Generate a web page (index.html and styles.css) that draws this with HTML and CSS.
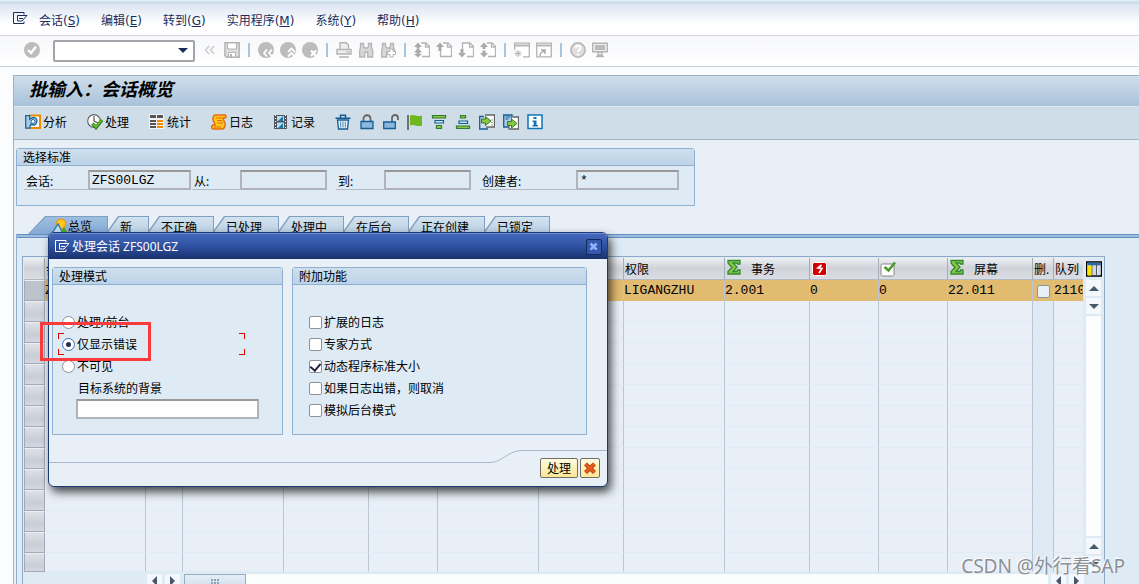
FILE: index.html
```html
<!DOCTYPE html>
<html lang="zh-CN">
<head>
    <meta charset="UTF-8">
    <meta name="viewport" content="width=device-width, initial-scale=1.0">
    <title>批输入：会话概览</title>
    <link rel="stylesheet" href="styles.css">
</head>
<body>
    <!-- Icon set -->
    <svg class="sprite" aria-hidden="true">
        <symbol id="i-session" viewBox="0 0 16 16"><path d="M12 3.500V1.500H1.500v11H12v-2M12 4.500H5.500v5.500H10l5-5.500h-3M7 7.500h4" fill="none" stroke="currentColor"/></symbol>
        <symbol id="i-ok" viewBox="0 0 16 16"><circle cx="8" cy="8" r="8" fill="#bcbcbc"/><path d="M4 8l3 3 5-6.500" fill="none" stroke="#fff" stroke-width="2.400"/></symbol>
        <symbol id="i-chev" viewBox="0 0 16 16"><path d="M7 4L3.500 8 7 12M12 4L8.500 8l3.500 4" fill="none" stroke="#ccc" stroke-width="1.500"/></symbol>
        <symbol id="i-save" viewBox="0 0 16 16"><path d="M1 .8h14.200v14.400H2.500L.8 13.500z" fill="#ddd" stroke="#b4b4b4" stroke-width="1.500"/><path d="M3.500 1h9v6h-9zM4.500 10.500h7v4.500h-7z" fill="#fff" stroke="#b4b4b4"/><path d="M6 12h2v3H6z" fill="#b4b4b4"/></symbol>
        <symbol id="i-back" viewBox="0 0 16 16"><circle cx="8" cy="8" r="8" fill="#bcbcbc"/><path d="M9 7.500L6 11l3 3.500M14 7.500L11 11l3 3.500" fill="none" stroke="#fff" stroke-width="1.800"/></symbol>
        <symbol id="i-exit" viewBox="0 0 16 16"><circle cx="8" cy="8" r="8" fill="#bcbcbc"/><path d="M8 10l3.500-3.500L15 10M8 14.500L11.500 11l3.500 3.500" fill="none" stroke="#fff" stroke-width="1.800"/></symbol>
        <symbol id="i-cancel" viewBox="0 0 16 16"><circle cx="8" cy="8" r="8" fill="#bcbcbc"/><path d="M9 8.500l5 5.500M14 8.500L9 14" fill="none" stroke="#fff" stroke-width="2.200"/></symbol>
        <symbol id="i-print" viewBox="0 0 16 16"><path d="M4 7V.7h6L12.500 3v4M1 7.500h14v4.500H1zM3 15h10" fill="#eee" stroke="#b4b4b4" stroke-width="1.400"/><path d="M10 10h4" stroke="#b4b4b4"/></symbol>
        <symbol id="i-find" viewBox="0 0 16 16"><path d="M2.500 1.500h3v3L7 6h2l1.500-1.500v-3h3v4l1.200 3V15h-5v-5h-3v5h-5V8.500l.8-3z" fill="#d8d8d8" stroke="#b4b4b4" stroke-width="1.300"/></symbol>
        <symbol id="i-findnext" viewBox="0 0 16 16"><path d="M2.500 1.500h3v3L7 6h2l1.500-1.500v-3h3v4l1.200 3V12h-5v-2h-3v5h-5V8.500l.8-3z" fill="#d8d8d8" stroke="#b4b4b4" stroke-width="1.300"/><path d="M10 7h3v2.500h2.500v3H13V15h-3v-2.500H7.500v-3H10z" fill="#fff" stroke="#b4b4b4"/></symbol>
        <symbol id="i-first" viewBox="0 0 16 16"><path d="M7 1h5l3.500 3.500v10H8M11.500 1v4h4" fill="#fff" stroke="#b4b4b4" stroke-width="1.300"/><path d="M4 .5L8 5H5.500v1.500h-3V5H0zM4 6l4 4.500H5.500V12H8l-4 3.500L0 12h2.500v-1.500H0z" fill="#aaa"/></symbol>
        <symbol id="i-prev" viewBox="0 0 16 16"><path d="M7 1h5l3.500 3.500v10H4.500V9M11.500 1v4h4" fill="#fff" stroke="#b4b4b4" stroke-width="1.300"/><path d="M4 .5L8 5H5.500v4h-3V5H0z" fill="#aaa"/></symbol>
        <symbol id="i-next" viewBox="0 0 16 16"><path d="M4.500 7V1H12l3.500 3.500v10H9M11.500 1v4h4" fill="#fff" stroke="#b4b4b4" stroke-width="1.300"/><path d="M4 15.500L8 11H5.500V7h-3v4H0z" fill="#aaa"/></symbol>
        <symbol id="i-last" viewBox="0 0 16 16"><path d="M7 1h5l3.500 3.500v10H8M11.500 1v4h4" fill="#fff" stroke="#b4b4b4" stroke-width="1.300"/><path d="M4 .5L8 5H5.500v2h-3V5H0zM2.500 8.500h3v2.500H8l-4 4.500L0 11h2.500z" fill="#aaa"/></symbol>
        <symbol id="i-newwin" viewBox="0 0 16 16"><path d="M.7 8V1.200h14.600v13.600H9" fill="#fff" stroke="#b4b4b4" stroke-width="1.300"/><path d="M1 3.500h14" stroke="#b4b4b4" stroke-width="2"/><path d="M4 8v7M.5 11.500h7M1.500 9l5 5M6.500 9l-5 5" stroke="#b4b4b4"/></symbol>
        <symbol id="i-shortcut" viewBox="0 0 16 16"><path d="M.7 1.200h14.600v13.600H.7z" fill="#fff" stroke="#b4b4b4" stroke-width="1.300"/><path d="M1 3.500h14" stroke="#b4b4b4" stroke-width="2"/><path d="M4 14c0-3 1-4 4.500-5M5 8h4v4" fill="none" stroke="#aaa" stroke-width="1.500"/></symbol>
        <symbol id="i-help" viewBox="0 0 16 16"><circle cx="8" cy="8" r="7.200" fill="#ddd" stroke="#b4b4b4" stroke-width="1.500"/><path d="M5.500 6.500c0-3.500 5-3.500 5-.5 0 2-2.500 1.800-2.500 4M8 11.500v2" fill="none" stroke="#fff" stroke-width="2"/></symbol>
        <symbol id="i-monitor" viewBox="0 0 16 16"><path d="M.7 1.200h14.600v8.600H.7zM6 10h4v3H6zM4 14.500h8" fill="#eee" stroke="#b4b4b4" stroke-width="1.400"/><path d="M3 3h10v5H3z" fill="#bbb"/></symbol>

        <symbol id="i-analyse" viewBox="0 0 16 16"><path d="M4 1.500h11v12.500H4" fill="#fff" stroke="#f08a00" stroke-width="2"/><path d="M.7 1.700h4v3.500c5-4 8 0 7 3-1 4-4 3-6 2l-1 4H.7z" fill="#a4cbe8" stroke="#1b6699" stroke-width="1.300"/><circle cx="8" cy="7.500" r="2" fill="#fff" stroke="#1b6699"/></symbol>
        <symbol id="i-execute" viewBox="0 0 16 16"><circle cx="7" cy="7" r="6.300" fill="#fff" stroke="#666" stroke-width="1.200"/><path d="M7 2v5l4 2" fill="none" stroke="#666" stroke-width="1.300"/><path d="M5.500 9.500l3.500 4 6-7.500" fill="none" stroke="#2d7d1b" stroke-width="3.400"/><path d="M6 10l3 3 5.500-6.500" fill="none" stroke="#72bd2b" stroke-width="1.700"/></symbol>
        <symbol id="i-stats" viewBox="0 0 16 16"><path d="M0 0h15v15H0z" fill="#f4f4f4"/><path d="M1 1h6v3H1zM1 6h6v2H1zM1 9h6v2H1zM1 12h6v2H1zM8 1h6v3H8z" fill="#555"/><path d="M8 6h6v2H8zM8 9h6v2H8zM8 12h6v2H8z" fill="#f08a00"/></symbol>
        <symbol id="i-log" viewBox="0 0 16 16"><path d="M4 1h10c2 1 1 3 0 3h-2c0 3 3 4 2 8-.500 2-1.500 3-3 3H2c-2-1-2-3 0-4h2c0-3-3-4-2-7 .5-2 1-3 2-3z" fill="#ffc51e" stroke="#e36c0a" stroke-width="1.400"/><path d="M5 4h6M6 6.500h5M6.500 9H12M3 13h7" stroke="#e36c0a"/></symbol>
        <symbol id="i-record" viewBox="0 0 16 16"><path d="M1 1h13v14H1z" fill="#4f5760"/><path d="M4 2h7v5H4zM4 8.500h7V14H4z" fill="#b9dcf0"/><path d="M5 7l5-5v5zM5 14l5-5v5z" fill="#1f78a8"/><path d="M2.500 1v14M12.500 1v14" stroke="#fff" stroke-dasharray="1 2"/></symbol>
        <symbol id="i-trash" viewBox="0 0 16 16"><path d="M2.500 6h11l-1 9h-9z" fill="#e6f1f9" stroke="#155e91" stroke-width="1.300"/><path d="M.5 4.200h15M5.500 3.500V1.200h5v2.300" fill="none" stroke="#155e91" stroke-width="1.500"/><path d="M5.700 7.500v6M8 7.500v6M10.300 7.500v6" stroke="#4a8bb8"/></symbol>
        <symbol id="i-lock" viewBox="0 0 16 16"><path d="M4.500 8V5c0-5 7-5 7 0v3" fill="none" stroke="#666" stroke-width="1.800"/><path d="M2 7.500h12v7H2z" fill="#8cb8e0" stroke="#155e91" stroke-width="1.300"/></symbol>
        <symbol id="i-unlock" viewBox="0 0 16 16"><path d="M9 8V4c0-4 6-4 6 0v2" fill="none" stroke="#666" stroke-width="1.800"/><path d="M.7 8h11.600v6.500H.7z" fill="#8cb8e0" stroke="#155e91" stroke-width="1.300"/></symbol>
        <symbol id="i-flag" viewBox="0 0 16 16"><path d="M1 1v15" stroke="#666" stroke-width="1.800"/><path d="M3 1.500c4-2 7 2 12 0v10c-5 2-8-2-12 0z" fill="#6fb71f"/></symbol>
        <symbol id="i-filter" viewBox="0 0 16 16"><path d="M1.500 1.500h13v2.500h-13zM5.500 11.500h5v3h-5z" fill="#8cc63f" stroke="#2f7a35" stroke-width="1.200"/><path d="M4 6.500h8.500V9H4z" fill="#cde6f6" stroke="#155e91" stroke-width="1.200"/></symbol>
        <symbol id="i-stack" viewBox="0 0 16 16"><path d="M5.500 1.500h5V4h-5zM1.500 12h13v2.500h-13z" fill="#8cc63f" stroke="#2f7a35" stroke-width="1.200"/><path d="M4 7h8.500v2.500H4z" fill="#cde6f6" stroke="#155e91" stroke-width="1.200"/></symbol>
        <symbol id="i-import" viewBox="0 0 16 16"><path d="M6 1h9.500v12H7" fill="#fff" stroke="#666" stroke-width="1.300"/><path d="M5 2.500H.7V15H9" fill="none" stroke="#155e91" stroke-width="1.300"/><path d="M12 6h2M12 8.500h2M12 11h2" stroke="#999"/><path d="M2.500 5h4V2.500L12 7l-5.500 4.500V9h-4z" fill="#8cc63f" stroke="#2f7a35"/></symbol>
        <symbol id="i-export" viewBox="0 0 16 16"><path d="M.7 1H9v12H.7z" fill="#a8cbe8" stroke="#155e91" stroke-width="1.300"/><path d="M9.500 3h6v12H6v-3" fill="#fff" stroke="#666" stroke-width="1.300"/><path d="M2.500 3h5M2.500 5h3" stroke="#155e91"/><path d="M4.500 7.500h4V5l5.500 4.500-5.500 4.500v-2.500h-4z" fill="#8cc63f" stroke="#2f7a35"/></symbol>
        <symbol id="i-info" viewBox="0 0 16 16"><path d="M1 1h14v13.500H1z" fill="#fff" stroke="#0f73b5" stroke-width="1.500"/><path d="M6.500 3h3v2h-3zM5.500 6.500h4V11H11v1.500H5.500V11h1.200V8H5.500z" fill="#0f73b5"/></symbol>
        <symbol id="i-overview" viewBox="0 0 16 16"><circle cx="9" cy="6" r="5" fill="#ffc51e" stroke="#f08a00"/><path d="M0 15.500L6 6l5 9.500" fill="#c8e0f2" stroke="#2b7fb5" stroke-width="1.400"/><path d="M8 15.500l4-7 4 7z" fill="#59a82a"/></symbol>
        <symbol id="i-sum" viewBox="0 0 16 16"><path d="M2 1.500h12V5h-2.500l-.5-1H7l4 4-4 4.500h4l.5-1.500H14v4H2v-2.500L6 8.500 2 4z" fill="#8cc63f" stroke="#2f8a35" stroke-width="1.300"/></symbol>
        <symbol id="i-error" viewBox="0 0 16 16"><rect x="1.500" y="1.500" width="14" height="13" rx="2" fill="#d00000" stroke="#fff"/><path d="M10.500 4l-3.500 3 4 .5-3 4.500" fill="none" stroke="#fff" stroke-width="1.700"/></symbol>
        <symbol id="i-done" viewBox="0 0 16 16"><rect x="1" y="3" width="13" height="12" rx="1.500" fill="#fff" stroke="#888"/><path d="M4.500 6l4 3.500L15 1.500" fill="none" stroke="#4a9a2b" stroke-width="2.600"/></symbol>
        <symbol id="i-layout" viewBox="0 0 16 16"><path d="M.7 1h14.600v14H.7z" fill="#fff" stroke="#000" stroke-width="1.400"/><path d="M1.500 1.700h13v2.800h-13z" fill="#1f6fc0"/><path d="M1.500 4.500h4v10h-4z" fill="#ffe600"/><path d="M7 5h3v9H7zM11.500 5h3v9h-3z" fill="#c9d9e6"/><path d="M6 2v13M10.500 2v13" stroke="#555"/></symbol>
        <symbol id="i-close" viewBox="0 0 16 16"><path d="M3.500 4l9 8.500M12.500 4l-9 8.500" stroke="#c23b10" stroke-width="4.200"/><path d="M3.500 4l9 8.500M12.500 4l-9 8.500" stroke="#e85f1c" stroke-width="2.400"/></symbol>
    </svg>

    <nav class="menubar">
        <svg class="icon"><use href="#i-session"/></svg>
        <a href="#">会话(<u>S</u>)</a>
        <a href="#">编辑(<u>E</u>)</a>
        <a href="#">转到(<u>G</u>)</a>
        <a href="#">实用程序(<u>M</u>)</a>
        <a href="#">系统(<u>Y</u>)</a>
        <a href="#">帮助(<u>H</u>)</a>
    </nav>

    <div class="toolbar">
        <button aria-label="确认"><svg class="icon"><use href="#i-ok"/></svg></button>
        <div class="command">
            <input type="text" aria-label="命令">
            <span class="caret"></span>
        </div>
        <button aria-label="收起"><svg class="icon"><use href="#i-chev"/></svg></button>
        <button aria-label="保存"><svg class="icon"><use href="#i-save"/></svg></button>
        <span class="sep"></span>
        <button aria-label="返回"><svg class="icon"><use href="#i-back"/></svg></button>
        <button aria-label="退出"><svg class="icon"><use href="#i-exit"/></svg></button>
        <button aria-label="取消"><svg class="icon"><use href="#i-cancel"/></svg></button>
        <span class="sep"></span>
        <button aria-label="打印"><svg class="icon"><use href="#i-print"/></svg></button>
        <button aria-label="查找"><svg class="icon"><use href="#i-find"/></svg></button>
        <button aria-label="继续查找"><svg class="icon"><use href="#i-findnext"/></svg></button>
        <span class="sep"></span>
        <button aria-label="第一页"><svg class="icon"><use href="#i-first"/></svg></button>
        <button aria-label="上一页"><svg class="icon"><use href="#i-prev"/></svg></button>
        <button aria-label="下一页"><svg class="icon"><use href="#i-next"/></svg></button>
        <button aria-label="最后一页"><svg class="icon"><use href="#i-last"/></svg></button>
        <span class="sep"></span>
        <button aria-label="新建会话"><svg class="icon"><use href="#i-newwin"/></svg></button>
        <button aria-label="快捷方式"><svg class="icon"><use href="#i-shortcut"/></svg></button>
        <span class="sep"></span>
        <button aria-label="帮助"><svg class="icon"><use href="#i-help"/></svg></button>
        <button aria-label="布局"><svg class="icon"><use href="#i-monitor"/></svg></button>
    </div>

    <main>
        <h1>批输入：会话概览</h1>

        <div class="actions">
            <button class="labelled"><svg class="icon"><use href="#i-analyse"/></svg><span>分析</span></button>
            <button class="labelled"><svg class="icon"><use href="#i-execute"/></svg><span>处理</span></button>
            <button class="labelled"><svg class="icon"><use href="#i-stats"/></svg><span>统计</span></button>
            <button class="labelled"><svg class="icon"><use href="#i-log"/></svg><span>日志</span></button>
            <button class="labelled"><svg class="icon"><use href="#i-record"/></svg><span>记录</span></button>
            <button aria-label="删除"><svg class="icon"><use href="#i-trash"/></svg></button>
            <button aria-label="锁定"><svg class="icon"><use href="#i-lock"/></svg></button>
            <button aria-label="解锁"><svg class="icon"><use href="#i-unlock"/></svg></button>
            <button aria-label="标记"><svg class="icon"><use href="#i-flag"/></svg></button>
            <button aria-label="降序"><svg class="icon"><use href="#i-filter"/></svg></button>
            <button aria-label="升序"><svg class="icon"><use href="#i-stack"/></svg></button>
            <button aria-label="导入"><svg class="icon"><use href="#i-import"/></svg></button>
            <button aria-label="导出"><svg class="icon"><use href="#i-export"/></svg></button>
            <button aria-label="信息"><svg class="icon"><use href="#i-info"/></svg></button>
        </div>

        <div class="content">
            <section class="group criteria">
                <h2>选择标准</h2>
                <div class="fields">
                    <label class="w64" for="session">会话:</label>
                    <input type="text" id="session" class="long" value="ZFS00LGZ">
                    <label class="w48" for="from">从:</label>
                    <input type="text" id="from">
                    <label class="w48 spaced" for="to">到:</label>
                    <input type="text" id="to">
                    <label class="w96 spaced" for="creator">创建者:</label>
                    <input type="text" id="creator" class="long" value="*">
                </div>
            </section>

            <div class="tabs">
                <button class="tab active"><svg class="icon"><use href="#i-overview"/></svg>总览</button>
                <button class="tab narrow">新</button>
                <button class="tab">不正确</button>
                <button class="tab">已处理</button>
                <button class="tab">处理中</button>
                <button class="tab">在后台</button>
                <button class="tab wide">正在创建</button>
                <button class="tab">已锁定</button>
            </div>

            <div class="panel">
                <div class="frame">
                    <div class="grid">
                        <table id="sessionTable">
                            <colgroup>
                                <col class="c21"><col class="c101"><col class="c37"><col class="c101"><col class="c85">
                                <col class="c69"><col class="c101"><col class="c85"><col class="c101"><col class="c85">
                                <col class="c69"><col class="c69"><col class="c85"><col class="c21"><col class="c29">
                            </colgroup>
                            <thead>
                                <tr>
                                    <th></th>
                                    <th>会话</th>
                                    <th></th><th></th><th></th><th></th><th></th><th></th>
                                    <th>权限</th>
                                    <th><span><svg class="icon"><use href="#i-sum"/></svg>事务</span></th>
                                    <th><svg class="icon"><use href="#i-error"/></svg></th>
                                    <th><svg class="icon"><use href="#i-done"/></svg></th>
                                    <th><span><svg class="icon"><use href="#i-sum"/></svg>屏幕</span></th>
                                    <th>删.</th>
                                    <th>队列</th>
                                </tr>
                            </thead>
                            <tbody>
                                <tr class="selected">
                                    <td></td>
                                    <td>ZFS00LGZ</td>
                                    <td></td><td></td><td></td><td></td><td></td><td></td>
                                    <td>LIGANGZHU</td>
                                    <td>2.001</td>
                                    <td>0</td>
                                    <td>0</td>
                                    <td>22.011</td>
                                    <td><input type="checkbox" aria-label="删除"></td>
                                    <td>2110</td>
                                </tr>
                            </tbody>
                        </table>
                        <div class="vscroll">
                            <button class="layout" aria-label="配置"><svg class="icon"><use href="#i-layout"/></svg></button>
                            <button class="arrow up" aria-label="上"></button>
                            <button class="arrow down" aria-label="下"></button>
                            <div class="track"></div>
                            <button class="arrow up" aria-label="上"></button>
                            <button class="arrow down" aria-label="下"></button>
                        </div>
                    </div>
                    <div class="hscroll">
                        <button class="arrow left" aria-label="左"></button>
                        <button class="arrow right" aria-label="右"></button>
                        <div class="thumb"></div>
                        <div class="track"></div>
                        <button class="arrow left" aria-label="左"></button>
                        <button class="arrow right" aria-label="右"></button>
                    </div>
                </div>
            </div>
        </div>
    </main>

    <div class="dialog" role="dialog" aria-labelledby="dialogTitle">
        <header>
            <svg class="icon"><use href="#i-session"/></svg>
            <h2 id="dialogTitle">处理会话 ZFS00LGZ</h2>
            <button aria-label="关闭"><svg viewBox="0 0 16 16"><path d="M4 4l7 7M11 4l-7 7" stroke="#8fb4ff" stroke-width="3"/></svg></button>
        </header>
        <div class="dialog-body">
            <section class="group mode">
                <h2>处理模式</h2>
                <div class="options">
                    <label><input type="radio" name="mode"><span>处理/前台</span></label>
                    <label class="focused"><input type="radio" name="mode" checked><span>仅显示错误</span></label>
                    <label><input type="radio" name="mode"><span>不可见</span></label>
                    <label class="plain" for="target"><span>目标系统的背景</span></label>
                    <input type="text" id="target">
                </div>
            </section>
            <section class="group extras">
                <h2>附加功能</h2>
                <div class="options">
                    <label><input type="checkbox"><span>扩展的日志</span></label>
                    <label><input type="checkbox"><span>专家方式</span></label>
                    <label><input type="checkbox" checked><span>动态程序标准大小</span></label>
                    <label><input type="checkbox"><span>如果日志出错，则取消</span></label>
                    <label><input type="checkbox"><span>模拟后台模式</span></label>
                </div>
            </section>
        </div>
        <footer>
            <div class="rule"></div>
            <svg class="curve" viewBox="0 0 32 13"><path d="M0 12.500C12 12.500 18 .5 32 .5" fill="none" stroke="#a9b7c9"/></svg>
            <div class="buttons">
                <button class="process">处理</button>
                <button class="abort" aria-label="取消"><svg class="icon"><use href="#i-close"/></svg></button>
            </div>
        </footer>
    </div>

    <div class="marker"></div>
    <div class="watermark">CSDN @外行看SAP</div>

    <script>
        // Fill the rest of the grid with empty rows
        const tbody = document.querySelector('#sessionTable tbody');
        for (let i = 0; i < 13; i++) {
            const row = document.createElement('tr');
            row.innerHTML = '<td></td>'.repeat(15);
            tbody.appendChild(row);
        }
    </script>
</body>
</html>
```
FILE: styles.css
```css
* {
    box-sizing: border-box;
}

body {
    font-family: "Noto Sans", "Noto Sans CJK SC", sans-serif;
    font-size: 12px;
    line-height: 16px;
    margin: 0;
    height: 100vh;
    display: flex;
    flex-direction: column;
    position: relative;
    overflow: hidden;
    background: #fbfcfe;
    color: #000;
}

h1, h2 {
    margin: 0;
}

button {
    font: inherit;
    color: inherit;
    padding: 0;
    border: none;
    background: none;
    flex-shrink: 0;
}

input {
    font-family: "Liberation Mono", monospace;
    font-size: 13px;
    color: #000;
    margin: 0;
    border: 1px solid #a5a5a5;
}

.sprite {
    position: absolute;
    width: 0;
    height: 0;
}

.icon {
    display: block;
    width: 16px;
    height: 16px;
    flex-shrink: 0;
}

/* Menu and system toolbar */
.menubar {
    display: flex;
    flex-shrink: 0;
    align-items: center;
    gap: 21px;
    height: 36px;
    padding: 6px 12px 0;
    border-bottom: 1px solid #d5d9df;
    background: linear-gradient(#edf3fa 0, #c9d8ea 2px, #dde6f2 5px, #fff 24px);
    font-family: "DejaVu Sans", "Noto Sans CJK SC", sans-serif;
    color: #1b2d5c;
}

.menubar .icon {
    margin: -4px -10px 0 0;
}

.menubar a {
    color: inherit;
    text-decoration: none;
}

.toolbar {
    display: flex;
    flex-shrink: 0;
    align-items: center;
    gap: 6px;
    height: 31px;
    padding: 0 24px 2px;
    border-bottom: 1px solid #c9d0dc;
    background: linear-gradient(#f7f8fb, #fff);
}

.command {
    position: relative;
    margin: 2px 1px 0 7px;
}

.command input {
    display: block;
    width: 142px;
    height: 22px;
    border: 2px solid #a2a5aa;
    border-radius: 2px;
    background: #fff;
}

.caret {
    position: absolute;
    right: 7px;
    top: 8px;
    border: 5px solid transparent;
    border-top-color: #1b2d5c;
    border-bottom: none;
}

.sep {
    width: 6px;
    height: 14px;
    background: linear-gradient(90deg, transparent 2px, #a9c6e0 2px, #a9c6e0 4px, transparent 4px);
}

/* Screen title and application toolbar */
main {
    flex: 1;
    min-height: 0;
    margin: 8px 0 0 13px;
    border: solid #9db0c6;
    border-width: 1px 0 0 1px;
    background: #e8eff7;
    overflow: hidden;
}

h1 {
    height: 31px;
    padding-left: 15px;
    border-bottom: 1px solid #dfe9f2;
    background: linear-gradient(#d0deeb, #a9c2da);
    font-size: 18px;
    font-style: italic;
    line-height: 26px;
}

.actions {
    display: flex;
    align-items: center;
    gap: 8px;
    height: 33px;
    padding: 0 11px 2px;
    border-bottom: 1px solid #a3b7cc;
    background: #cfdde8;
}

.actions .labelled {
    display: flex;
    align-items: center;
    gap: 2px;
    width: 54px;
}

.labelled span {
    padding-top: 2px;
}

.content {
    padding: 8px 0 0 2px;
}

/* Group boxes */
.group {
    border: 1px solid #8fb0d0;
    border-radius: 3px 3px 0 0;
    background: #deebf5;
}

.group h2 {
    height: 17px;
    padding-left: 6px;
    border-bottom: 1px solid #8fb0d0;
    background: linear-gradient(#cfdfed, #bcd3e8);
    font-size: 12px;
    font-weight: normal;
    line-height: 18px;
}

.criteria {
    width: 679px;
    height: 58px;
}

.fields {
    display: flex;
    padding: 4px 7px;
}

.fields label {
    height: 20px;
    padding: 4px 0 0 2px;
    border-bottom: 1px solid #b4bac0;
}

.fields input {
    width: 87px;
    height: 20px;
    padding: 0 2px;
    border: 2px solid #b0b4b8;
    border-top-color: #999;
    background: #deebf5;
}

.fields .long {
    width: 103px;
    margin-right: 1px;
}

.w48 { width: 48px; }
.w64 { width: 64px; }
.w96 { width: 96px; }

.spaced {
    margin-left: 9px;
}

/* Tabs */
.tabs {
    display: flex;
    height: 18px;
    margin: 10px 0 0 12px;
}

.tab {
    position: relative;
    z-index: 0;
    width: 65px;
    padding: 4px 0 0 12px;
    background: #7f9fbe;
    clip-path: polygon(0 14px, 10px 0, 100% 0, 100% 100%, 0 100%);
    text-align: left;
    white-space: nowrap;
}

.tab::before {
    content: "";
    position: absolute;
    inset: 1px 1px 0 1px;
    z-index: -1;
    background: linear-gradient(#d3e2ee, #b9d0e5);
    clip-path: polygon(0 14px, 10px 0, 100% 0, 100% 100%, 0 100%);
}

.tab.narrow {
    width: 41px;
}

.tab.wide {
    width: 76px;
}

.tab.active {
    display: flex;
    width: 80px;
    padding: 3px 0 0 24px;
}

.tab.active,
.tab.active::before {
    clip-path: polygon(0 100%, 17px 0, 100% 0, 100% 100%);
}

.tab.active::before {
    background: linear-gradient(#9dbfe0, #84a9d6);
}

.tab .icon {
    margin-top: -1px;
}

.panel {
    padding: 22px 0 0 5px;
    border-left: 1px solid #8fb0d0;
    background: linear-gradient(#6690c0 1px, #9bbde0 1px, #9bbde0 3px, #6690c0 3px, #6690c0 4px, #deebf5 4px);
}

/* Session grid */
.frame {
    width: 1083px;
    border: 1px solid #8fa9c8;
    border-bottom: none;
    padding: 1px 0 0 1px;
    background: #deebf5;
}

.grid {
    display: flex;
}

table {
    width: 1059px;
    table-layout: fixed;
    border-collapse: separate;
    border-spacing: 0;
}

.c21 { width: 21px; }
.c29 { width: 29px; }
.c37 { width: 37px; }
.c69 { width: 69px; }
.c85 { width: 85px; }
.c101 { width: 101px; }

th {
    height: 22px;
    padding: 3px 0 0 1px;
    border-right: 1px solid #a5adb8;
    border-bottom: 1px solid #b3bac3;
    background: linear-gradient(#edf0f3, #cfd3d9 10px, #dadde2);
    font-weight: normal;
    text-align: left;
    white-space: nowrap;
    overflow: hidden;
}

th span {
    display: flex;
    gap: 9px;
}

th .icon {
    margin-top: -3px;
}

td {
    height: 21px;
    padding: 2px 0 0;
    border-right: 1px solid #bcc5d3;
    border-bottom: 1px solid #deebf5;
    background: #e8eff7;
    font-family: "Liberation Mono", monospace;
    font-size: 13px;
    line-height: 16px;
    white-space: nowrap;
    overflow: hidden;
}

td:first-child {
    border: 1px solid #a3a9b8;
    border-top-color: #eceef1;
    background: linear-gradient(#dde0e5, #c9cdd5 12px, #d5d8e0);
}

td:nth-child(14) {
    background: #deebf5;
}

tr :last-child {
    border-right: none;
}

tbody tr:last-child td {
    height: 19px;
}

.selected td:not(:first-child) {
    background: #e1bb70;
    border-bottom-color: #e1bb70;
}

.selected td:first-child {
    background: #bcc3cb;
}

input[type="checkbox"],
input[type="radio"] {
    appearance: none;
    display: grid;
    place-items: center;
    width: 13px;
    height: 13px;
    border: 1px solid #8e9298;
    border-radius: 2px;
    background: #fff;
    flex-shrink: 0;
}

td input[type="checkbox"] {
    margin-left: 4px;
    background: #e8eff7;
}

input[type="radio"] {
    border-radius: 50%;
}

input[type="radio"]:checked {
    border-color: #3d74b0;
}

input[type="radio"]:checked::before {
    content: "";
    width: 5px;
    height: 5px;
    border-radius: 50%;
    background: #24304f;
}

input[type="checkbox"]:checked::before {
    content: "";
    width: 5px;
    height: 8px;
    margin-bottom: 2px;
    border: solid #24243f;
    border-width: 0 2px 2px 0;
    transform: rotate(40deg);
}

/* Scroll bars */
.vscroll {
    display: flex;
    flex-direction: column;
    align-items: center;
    gap: 2px;
    width: 21px;
    padding-top: 3px;
}

.layout {
    margin-bottom: 1px;
}

.arrow {
    display: grid;
    place-items: center;
    width: 15px;
    height: 16px;
    background: #f4f7fb;
}

.arrow::before {
    content: "";
    border: 5px solid transparent;
}

.up::before {
    border-top: none;
    border-bottom-color: #44596b;
}

.down::before {
    border-bottom: none;
    border-top-color: #44596b;
}

.left::before {
    border-left: none;
    border-right-color: #44596b;
}

.right::before {
    border-right: none;
    border-left-color: #44596b;
}

.track {
    flex: 1;
    width: 15px;
    background: #fbfcfc;
}

.hscroll {
    display: flex;
    gap: 3px;
    height: 16px;
    margin: 2px 20px 0 123px;
}

.hscroll .arrow {
    height: 14px;
}

.thumb {
    width: 62px;
    margin: 0 -3px 0 1px;
    padding: 4px 26px;
    border: 1px solid #98aebf;
    background:
        radial-gradient(circle at 1px 1px, #8fa4b6 1px, transparent 1px) 0 0 / 3px 3px content-box,
        linear-gradient(#e4eef6, #cddeeb);
}

/* Process dialog */
.dialog {
    position: absolute;
    left: 48px;
    top: 232px;
    width: 560px;
    border: 1px solid #1d3a78;
    border-radius: 6px;
    background: #e8eff7;
    box-shadow: 3px 5px 10px rgba(0, 0, 0, 0.7);
    overflow: hidden;
}

.dialog header {
    display: flex;
    align-items: center;
    gap: 2px;
    height: 26px;
    padding: 0 5px;
    border-top: 1px solid #6a8cd0;
    background: linear-gradient(#4468bd, #2e509f 50%, #19326f);
    color: #fff;
}

.dialog header h2 {
    flex: 1;
    font-size: 12px;
    font-weight: normal;
}

.dialog header button {
    width: 16px;
    height: 16px;
    border: 1px solid #16295c;
    border-radius: 2px;
    background: #3558ab;
}

.dialog header button svg {
    display: block;
}

.dialog-body {
    display: flex;
    gap: 9px;
    padding: 8px 3px 0;
}

.dialog .group {
    height: 168px;
}

.mode {
    width: 231px;
}

.extras {
    width: 295px;
}

.options {
    padding: 26px 9px 0;
}

.extras .options {
    padding-left: 16px;
}

.options label {
    display: flex;
    align-items: center;
    gap: 2px;
    height: 22px;
}

.options span {
    padding-top: 2px;
}

.options .plain {
    padding-left: 16px;
}

.options input[type="text"] {
    display: block;
    width: 183px;
    height: 20px;
    margin-left: 14px;
    border: 2px solid #b0b4b8;
    border-top-color: #999;
    background: #fff;
}

/* Red corner marks round the option that has the focus */
.options .focused {
    width: 187px;
    margin-left: -4px;
    padding-left: 4px;
    background:
        linear-gradient(#d00, #d00) 0 0 / 6px 1px,
        linear-gradient(#d00, #d00) 0 0 / 1px 6px,
        linear-gradient(#d00, #d00) 100% 0 / 6px 1px,
        linear-gradient(#d00, #d00) 100% 0 / 1px 6px,
        linear-gradient(#d00, #d00) 0 100% / 6px 1px,
        linear-gradient(#d00, #d00) 0 100% / 1px 6px,
        linear-gradient(#d00, #d00) 100% 100% / 6px 1px,
        linear-gradient(#d00, #d00) 100% 100% / 1px 6px;
    background-repeat: no-repeat;
}

.dialog footer {
    display: flex;
    align-items: flex-start;
    padding-top: 15px;
}

.rule {
    flex: 1;
    height: 13px;
    border-bottom: 1px solid #a9b7c9;
}

.curve {
    display: block;
    width: 32px;
    height: 13px;
}

.buttons {
    display: flex;
    justify-content: flex-end;
    gap: 2px;
    width: 85px;
    padding: 7px 7px 8px 0;
    border-top: 1px solid #a9b7c9;
}

.buttons button {
    display: grid;
    place-items: center;
    width: 20px;
    height: 20px;
    border: 1px solid #6f6f66;
    border-radius: 2px;
    background: linear-gradient(#fffbe0, #fbe793);
}

.buttons .process {
    width: 38px;
    padding-top: 2px;
}

/* Highlight and watermark drawn over the screen */
.marker {
    position: absolute;
    left: 40px;
    top: 322px;
    width: 111px;
    height: 39px;
    border: 3px solid #fb3b3b;
}

.watermark {
    position: absolute;
    right: 14px;
    bottom: 6px;
    color: #8c9096;
    font-size: 19px;
    line-height: 24px;
    text-shadow: -1px -1px 0 #fff;
}
```
